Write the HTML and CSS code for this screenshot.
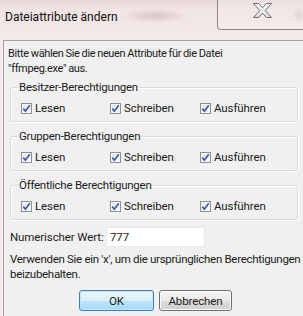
FILE: index.html
```html
<!DOCTYPE html>
<html lang="de">
<head>
    <meta charset="UTF-8">
    <title>Dateiattribute ändern</title>
    <link rel="stylesheet" href="styles.css">
</head>
<body>
    <div class="titlebar">
        <span class="title">Dateiattribute ändern</span>
        <div class="close">
            <svg width="19" height="15" viewBox="0 0 19 15">
                <defs>
                    <linearGradient id="xg" x1="0" y1="0" x2="0" y2="1">
                        <stop offset="0" stop-color="#ffffff"/>
                        <stop offset="1" stop-color="#dcdcdc"/>
                    </linearGradient>
                </defs>
                <polygon points="0.5,0.5 5.5,0.5 9.5,4.8 13.5,0.5 18.5,0.5 12.2,7.5 18.5,14.5 13.5,14.5 9.5,10.2 5.5,14.5 0.5,14.5 6.8,7.5" fill="url(#xg)" stroke="#6e6e6e" stroke-width="1" stroke-linejoin="round"/>
            </svg>
        </div>
    </div>

    <div class="client">
        <p class="intro">Bitte wählen Sie die neuen Attribute für die Datei<br>"ffmpeg.exe" aus.</p>

        <fieldset class="group">
            <legend>Besitzer-Berechtigungen</legend>
            <div class="checks">
                <label class="check"><span class="box"><svg width="9" height="9" viewBox="0 0 9 9"><path d="M1.3 4.6 L3.4 7.2 L7.8 1.2" fill="none" stroke="#3b5c9e" stroke-width="1.7"/></svg></span>Lesen</label>
                <label class="check"><span class="box"><svg width="9" height="9" viewBox="0 0 9 9"><path d="M1.3 4.6 L3.4 7.2 L7.8 1.2" fill="none" stroke="#3b5c9e" stroke-width="1.7"/></svg></span>Schreiben</label>
                <label class="check"><span class="box"><svg width="9" height="9" viewBox="0 0 9 9"><path d="M1.3 4.6 L3.4 7.2 L7.8 1.2" fill="none" stroke="#3b5c9e" stroke-width="1.7"/></svg></span>Ausführen</label>
            </div>
        </fieldset>

        <fieldset class="group">
            <legend>Gruppen-Berechtigungen</legend>
            <div class="checks">
                <label class="check"><span class="box"><svg width="9" height="9" viewBox="0 0 9 9"><path d="M1.3 4.6 L3.4 7.2 L7.8 1.2" fill="none" stroke="#3b5c9e" stroke-width="1.7"/></svg></span>Lesen</label>
                <label class="check"><span class="box"><svg width="9" height="9" viewBox="0 0 9 9"><path d="M1.3 4.6 L3.4 7.2 L7.8 1.2" fill="none" stroke="#3b5c9e" stroke-width="1.7"/></svg></span>Schreiben</label>
                <label class="check"><span class="box"><svg width="9" height="9" viewBox="0 0 9 9"><path d="M1.3 4.6 L3.4 7.2 L7.8 1.2" fill="none" stroke="#3b5c9e" stroke-width="1.7"/></svg></span>Ausführen</label>
            </div>
        </fieldset>

        <fieldset class="group">
            <legend>Öffentliche Berechtigungen</legend>
            <div class="checks">
                <label class="check"><span class="box"><svg width="9" height="9" viewBox="0 0 9 9"><path d="M1.3 4.6 L3.4 7.2 L7.8 1.2" fill="none" stroke="#3b5c9e" stroke-width="1.7"/></svg></span>Lesen</label>
                <label class="check"><span class="box"><svg width="9" height="9" viewBox="0 0 9 9"><path d="M1.3 4.6 L3.4 7.2 L7.8 1.2" fill="none" stroke="#3b5c9e" stroke-width="1.7"/></svg></span>Schreiben</label>
                <label class="check"><span class="box"><svg width="9" height="9" viewBox="0 0 9 9"><path d="M1.3 4.6 L3.4 7.2 L7.8 1.2" fill="none" stroke="#3b5c9e" stroke-width="1.7"/></svg></span>Ausführen</label>
            </div>
        </fieldset>

        <div class="numeric">
            <span class="numeric-label">Numerischer Wert:</span>
            <span class="input">777</span>
        </div>

        <p class="hint">Verwenden Sie ein 'x', um die ursprünglichen Berechtigungen<br>beizubehalten.</p>

        <div class="buttons">
            <button class="btn btn-default">OK</button>
            <button class="btn">Abbrechen</button>
        </div>
    </div>
</body>
</html>
```

FILE: styles.css
```css
html, body {
    margin: 0;
    padding: 0;
    overflow: hidden;
}
body {
    font-family: Roboto, "Noto Sans", sans-serif;
    font-size: 11.5px;
    letter-spacing: -0.1px;
    color: #1b1b1b;
    background:
        radial-gradient(ellipse 34px 7px at 155px 16px, rgba(170, 140, 140, 0.35), rgba(170, 140, 140, 0)),
        radial-gradient(ellipse 6px 8px at 299px 15px, rgba(90, 90, 90, 0.35), rgba(90, 90, 90, 0)),
        linear-gradient(to bottom, #e6d7d7 0, #f1e4e4 10px, #f5e9e9 40px);
    height: 316px;
}
.titlebar {
    display: flex;
    align-items: flex-start;
    height: 40px;
}
.title {
    padding: 9px 0 0 5px;
    line-height: 16px;
    font-size: 12px;
    letter-spacing: 0;
    color: #111;
    white-space: nowrap;
}
.close {
    margin-left: auto;
    margin-right: -6px;
    width: 92px;
    height: 30px;
    box-sizing: border-box;
    border-left: 1px solid #8d8787;
    border-bottom: 1px solid #8d8787;
    border-bottom-left-radius: 4px;
    background: linear-gradient(to bottom, rgba(240, 228, 228, 0.6), rgba(248, 238, 238, 0.6));
    padding: 3px 0 0 35px;
}
.close svg {
    display: block;
}
.client {
    margin-left: 3px;
    border-top: 1px solid #a79f9f;
    border-left: 1px solid #a79f9f;
    background: #f0f0f0;
    padding: 5px 0 0 4px;
    height: 280px;
    white-space: nowrap;
}
.intro {
    margin: 0;
    line-height: 15px;
    font-size: 11px;
    letter-spacing: -0.35px;
    word-spacing: -0.4px;
}
.group {
    margin: 4px 0 0 2px;
    padding: 0 7px 5px 7px;
    width: 288px;
    box-sizing: border-box;
    border: 1px solid #d5dbdf;
    border-radius: 3px;
    box-shadow: inset 1px 1px 0 #fff, 1px 1px 0 #fff;
}
.group + .group {
    margin-top: 7px;
}
.group legend {
    padding: 0 1px;
    line-height: 15px;
    letter-spacing: -0.25px;
}
.checks {
    display: grid;
    grid-template-columns: 89px 90px auto;
    padding: 6px 0 0 3px;
}
.check {
    display: flex;
    align-items: center;
    line-height: 15px;
}
.box {
    width: 11px;
    height: 11px;
    box-sizing: border-box;
    border: 1px solid #8e8f8f;
    background: linear-gradient(135deg, #dcdfe6 0%, #f4f5f8 60%, #ffffff 100%);
    box-shadow: inset 0 0 0 1px #f6f7f9;
    margin-right: 3px;
    display: flex;
    align-items: center;
    justify-content: center;
}
.box svg {
    display: block;
}
.numeric {
    display: flex;
    align-items: center;
    margin-top: 7px;
    padding-left: 2px;
}
.numeric-label {
    width: 96px;
}
.input {
    width: 99px;
    height: 20px;
    box-sizing: border-box;
    background: #fff;
    border: 1px solid #e3e9ef;
    padding-left: 3px;
    line-height: 18px;
}
.hint {
    margin: 5px 0 0 0;
    padding-left: 2px;
    line-height: 15px;
    letter-spacing: -0.3px;
}
.buttons {
    display: flex;
    gap: 5px;
    margin: 8px 0 0 71px;
}
.btn {
    font-family: inherit;
    font-size: 11.5px;
    letter-spacing: -0.1px;
    color: #1b1b1b;
    height: 21px;
    padding: 0;
    width: 73px;
    border: 1px solid #707070;
    border-radius: 3px;
    background: linear-gradient(to bottom, #f2f2f2 0, #ebebeb 50%, #dddddd 51%, #cfcfcf 100%);
    box-shadow: inset 0 0 0 1px #fcfcfc;
}
.btn-default {
    width: 75px;
    border-color: #3c7fb1;
    background: linear-gradient(to bottom, #eaf6fd 0, #d9f0fc 50%, #bee6fd 51%, #a7d9f5 100%);
    box-shadow: inset 0 0 0 1px #c5e5f6;
}
```
